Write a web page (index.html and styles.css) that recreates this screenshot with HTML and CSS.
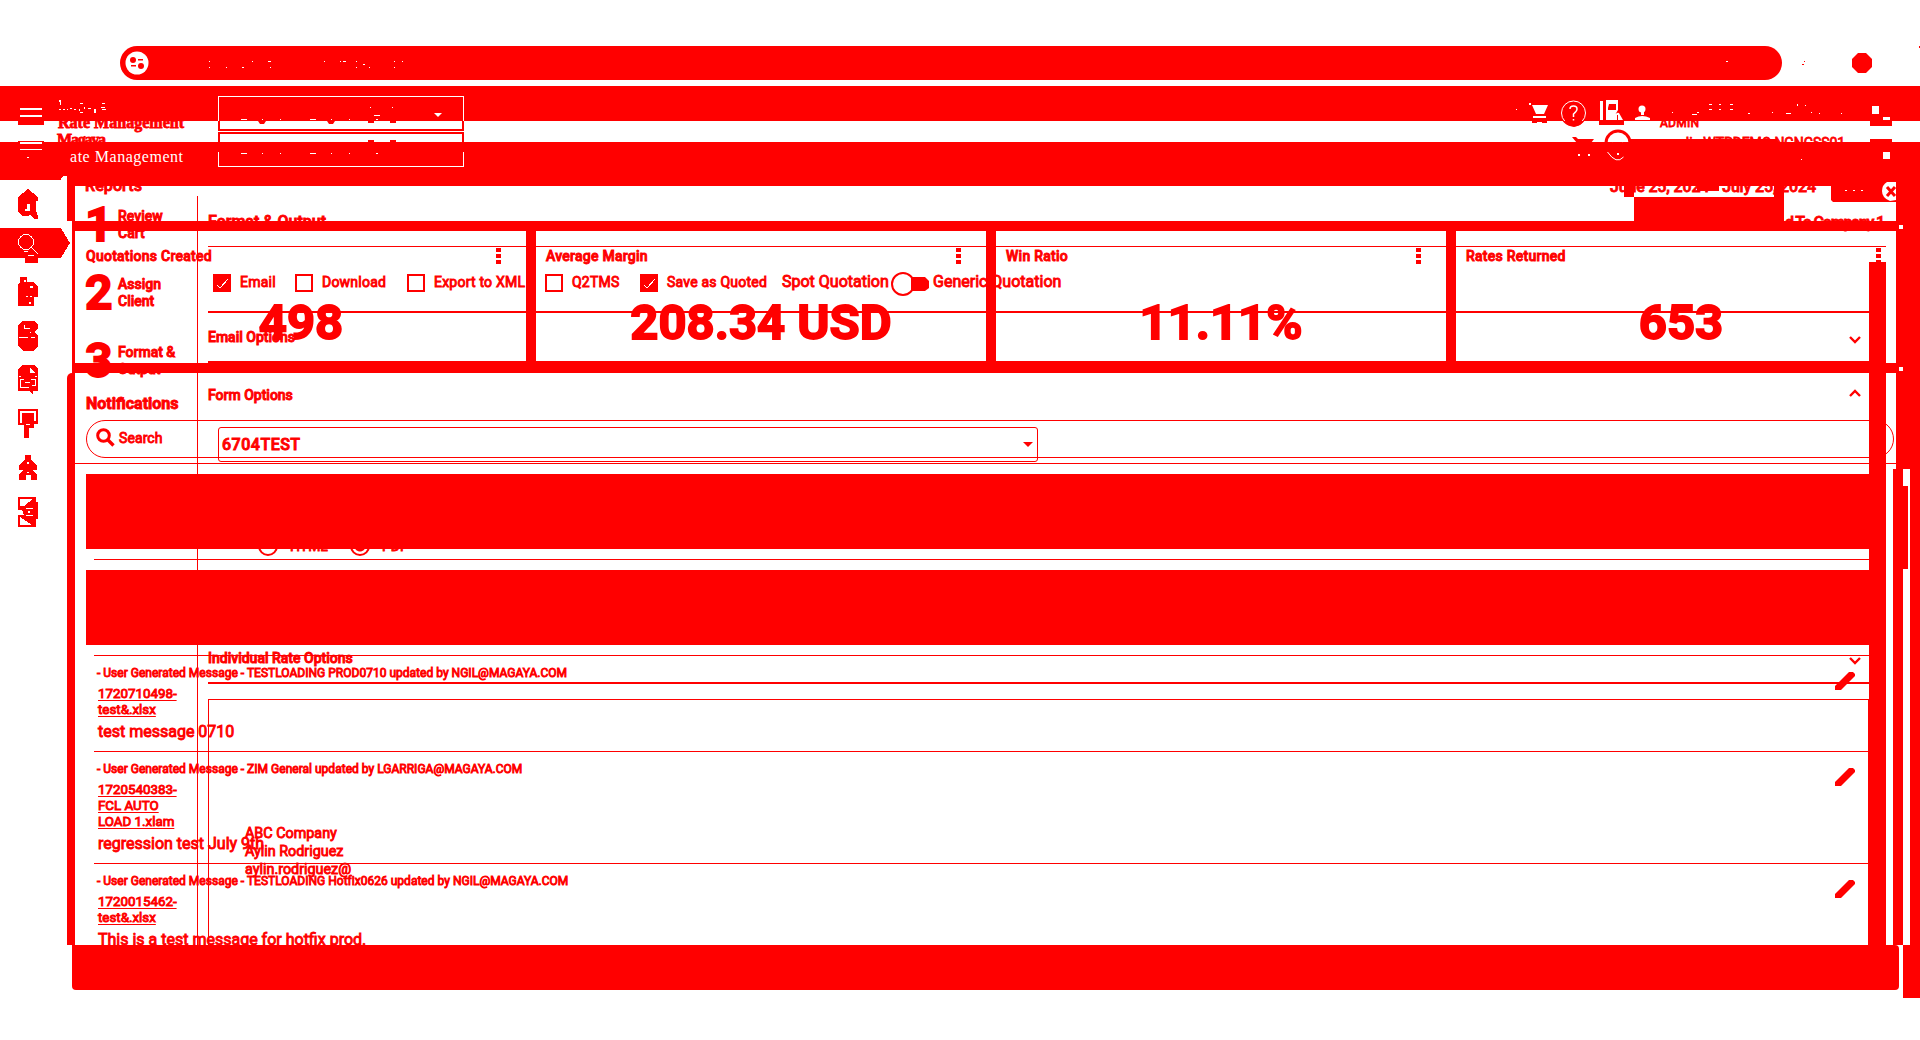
FILE: index.html
```html
<!DOCTYPE html>
<html lang="en">
<head>
<meta charset="utf-8">
<title>Rate Management</title>
<link rel="stylesheet" href="styles.css">
</head>
<body>
<div class="stage">
  <div class="layer dash">
    <div class="address"></div>
    <div class="band top"></div>
    <div class="band second"></div>
    <div class="body">
      <nav class="side">
        <svg width="70" height="369" viewBox="0 176 70 369" shape-rendering="crispEdges">
          <path fill="#fff" d="M63 176h4v10h-6v-8z"/>
          <path d="M0 228h61l9 15-9 15H0z"/>
          <path d="M28 189l10 8v4h-2v10l2 5v3h-3l-5-4-3 1h-5l-4-4v-15z"/>
          <path fill="#fff" d="M27 204h3v7h-5v-2h2z"/>
          <g fill="none" stroke="#fff" stroke-width="1"><circle cx="26" cy="242" r="7.5"/><path d="M31 247l7 7M24 251h4M28 255h6"/></g>
          <path d="M25 258h13v5H25z"/>
          <path d="M20 277h7v5h7l4 5v10h-4v9H18v-22l2-1z"/><path fill="#fff" d="M24 280h2v2h-2zM30 286h3v2h-3zM26 296h2v1h-2zM30 296h2v1h-2zM29 302h2v2h-2z"/>
          <path d="M22 321h12l4 4v4l-4 3 4 4v10l-5 5H23l-5-5v-21z"/><path fill="#fff" d="M24 325h1v3h5v1h-6zM19 337h9v1h-9zM31 337h4v1h-4zM30 332h1v1h-1z"/>
          <path d="M22 365h12l4 4v22h-5v4l-4-4H18v-22z"/><path fill="#fff" d="M30 367l5 6h-5zM19 376h2v1h-2zM35 376h2v1h-2zM20 379h4v1h-4zM31 379h5v1h-5zM20 380h1v7h8v1h-9zM35 380h1v6h-4v-1h3zM25 382h5v1h-5z"/>
          <path d="M18 409h20v15h-4v4h-5v10h-5v-13h-6z"/><path fill="#fff" d="M20 411h16v10h-2v-8H22v10h-2zM26 424h4v1h-4z"/>
          <path d="M25 455h6v5l6 5v5h-5l5 5v5h-6v-5h-5v5h-7v-5l4-5h-4v-5l6-5z"/><path fill="#fff" d="M27 462h2v2h-2zM27 472h2v1h-2z"/>
          <path d="M18 497h18v5h2v17h-2v8H18v-12h6l-2-5h-4z"/><path fill="#fff" d="M20 499h13l-9 7h-4zM20 517l12 8H20zM26 508h7v1h-7zM26 515h7v1h-7zM28 511h2v2h-2z"/>
        </svg>
      </nav>
      <main class="main">
        <header class="report-head"><span class="rep">Reports</span></header>
        <section class="kpis">
          <article class="kpi"><h3>Quotations Created</h3><i class="dots"></i><b>498</b></article>
          <article class="kpi"><h3>Average Margin</h3><i class="dots"></i><b>208.34 USD</b></article>
          <article class="kpi"><h3>Win Ratio</h3><i class="dots"></i><b>11.11%</b></article>
          <article class="kpi last"><h3>Rates Returned</h3><i class="dots"></i><b>653</b></article>
        </section>
        <section class="notes">
          <div class="notes-body">
            <h2>Notifications</h2>
            <div class="search"><svg width="20" height="20" viewBox="0 0 20 20"><circle cx="7.5" cy="7.5" r="5.8" fill="none" stroke="red" stroke-width="3"/><path d="M11.5 11.5l6 6" stroke="red" stroke-width="3.4"/></svg><span>Search</span></div>
            <div class="rule"></div>
            <div class="block"></div>
            <div class="sep"></div>
            <div class="block"></div>
            <div class="sep"></div>
            <article class="msg"><svg class="pen" width="20" height="18"><path d="M0 14L14 0h4l2 2v2L6 18H0z"/></svg><p class="meta">- User Generated Message - TESTLOADING PROD0710 updated by NGIL@MAGAYA.COM</p><a>1720710498-</a><a>test&amp;.xlsx</a><p class="text">test message 0710</p></article>
            <article class="msg tall"><svg class="pen" width="20" height="18"><path d="M0 14L14 0h4l2 2v2L6 18H0z"/></svg><p class="meta">- User Generated Message - ZIM General updated by LGARRIGA@MAGAYA.COM</p><a>1720540383-</a><a>FCL AUTO</a><a>LOAD 1.xlam</a><p class="text">regression test July 9th</p></article>
            <article class="msg cut"><svg class="pen" width="20" height="18"><path d="M0 14L14 0h4l2 2v2L6 18H0z"/></svg><p class="meta">- User Generated Message - TESTLOADING Hotfix0626 updated by NGIL@MAGAYA.COM</p><a>1720015462-</a><a>test&amp;.xlsx</a><p class="text">This is a test message for hotfix prod.</p></article>
          </div>
          <div class="rail"><div class="rail-top"></div><div class="rail-low"><i class="rail-bar"></i><i class="thumb"></i><i class="rail-bar"></i></div></div>
        </section>
        <footer class="foot"><div class="foot-main"></div><div class="foot-end"></div></footer>
      </main>
    </div>
  </div>

  <div class="layer quote">
    <ol class="steps">
      <li><b>1</b><span>Review<br>Cart</span></li>
      <li><b>2</b><span>Assign<br>Client</span></li>
      <li><b>3</b><span>Format &amp;<br>Output</span></li>
    </ol>
    <div class="form">
      <h2>Format &amp; Output</h2>
      <div class="form-row">
        <div class="fields">
          <div class="checks">
            <label class="c1"><svg class="box" width="18" height="18"><path d="M0 0h18v18H0z"/><path d="M4 11l3 3 8-9" fill="none" stroke="#fff" shape-rendering="crispEdges"/></svg><span>Email</span></label>
            <label class="c2"><i class="box"></i><span>Download</span></label>
            <label class="c3"><i class="box"></i><span>Export to XML</span></label>
            <label class="c4"><i class="box"></i><span>Q2TMS</span></label>
            <label class="c5"><svg class="box" width="18" height="18"><path d="M0 0h18v18H0z"/><path d="M4 11l3 3 8-9" fill="none" stroke="#fff" shape-rendering="crispEdges"/></svg><span>Save as Quoted</span></label>
            <span class="spot">Spot Quotation</span><svg class="toggle" width="40" height="24"><path d="M20 5h14l4 4v7l-4 3H20z"/><circle cx="12" cy="12" r="11" fill="none" stroke="red" stroke-width="2"/></svg><span class="generic">Generic Quotation</span>
          </div>
          <div class="panel"><span>Email Options</span><svg width="14" height="9"><path d="M2 2l5 5 5-5" class="chev"/></svg></div>
          <div class="panel-open"><span>Form Options</span><svg width="14" height="9"><path d="M2 7l5-5 5 5" class="chev"/></svg></div>
          <div class="select"><span>6704TEST</span><svg width="10" height="5"><path d="M0 0h10L5 5z"/></svg></div>
          <div class="radios"><i class="radio"></i><span class="html">HTML</span><i class="radio on"></i><span>PDF</span></div>
          <div class="panel-end"><span>Individual Rate Options</span><svg width="14" height="9"><path d="M2 2l5 5 5-5" class="chev"/></svg></div>
          <div class="editor"><p>ABC Company</p><p>Aylin Rodriguez</p><p>aylin.rodriguez@</p></div>
        </div>
        <div class="scroll"></div>
      </div>
    </div>
  </div>

  <svg class="layer header" width="1920" height="400" viewBox="0 0 1920 400">
    <!-- address bar -->
    <circle cx="137" cy="63" r="11.5" fill="#fff"/>
    <circle cx="133" cy="60" r="3"/><circle cx="141" cy="66" r="3"/><path d="M138 59h5v1.500h-5zM131 65h5v1.500h-5z"/>
    <path d="M1858 53h8l6 6v8l-6 6h-8l-6-6v-8z"/><path d="M1803 64h1v1h-1zM1804 61h1v1h-1zM1802 64h1v1h-1zM1919 46h1v2h-1zM267 389h1v1h-1z"/>
    <path fill="#fff" d="M209 61h1v1h-1zM209 67h1v1h-1zM226 67h1v1h-1zM242 67h2v1h-2zM252 61h1v1h-1zM268 61h3v1h-3zM270 67h1v1h-1zM324 61h1v1h-1zM340 61h1v1h-1zM343 61h3v1h-3zM356 61h1v1h-1zM356 67h1v1h-1zM363 64h2v1h-2zM369 67h1v1h-1zM394 61h1v1h-1zM394 67h1v1h-1zM402 61h1v1h-1zM1726 61h2v1h-2z"/>
    <!-- brand -->
    <g class="brand"><text x="58" y="128" textLength="126">Rate Management</text><text x="57" y="145" textLength="49">Magaya</text></g>
    <g shape-rendering="crispEdges"><path fill="red" d="M0 142h1920v8H0z"/>
    <path fill="#fff" d="M20 108h22v2H20zM20 115h22v2H20zM20 142h22v2H20zM20 149h22v1H20zM27 157h2v1h-2z"/><path d="M18 121h26v4H18zM18 141h26v1H18z"/>
    <path fill="#fff" d="M59 100h2v2h-2zM60 102h1v3h-1zM59 109h2v1h-2zM63 109h2v1h-2zM67 109h1v1h-1zM70 108h2v1h-2zM74 109h2v1h-2zM79 109h1v2h-1zM80 103h3v1h-3zM84 107h1v2h-1zM80 112h3v1h-3zM88 108h3v1h-3zM94 109h2v4h-2zM102 103h3v1h-3zM101 107h4v1h-4zM102 109h4v1h-4z"/></g>
    <g class="brand light"><text x="70" y="162" textLength="113">ate Management</text></g>
    <g fill="none" shape-rendering="crispEdges"><path stroke="#fff" d="M218.500 121V96.500h245V121M218.500 152v14.500h245V152"/><path stroke="red" stroke-width="2" d="M219 121v9h244v-9M219 142v-9h244v9"/></g>
    <path fill="#fff" d="M434 113h8l-4 4zM241 119h6v1h-6zM310 119h6v1h-6zM241 153h6v1h-6zM310 153h6v1h-6zM262 119h1v1h-1zM280 119h1v1h-1zM331 119h1v1h-1zM349 119h1v1h-1zM374 115h6v1h-6zM376 119h2v1h-2zM370 107h1v1h-1zM392 107h1v1h-1zM262 153h1v1h-1zM280 153h1v1h-1zM331 153h1v1h-1zM349 153h1v1h-1zM376 153h2v1h-2z"/>
    <path d="M258 121h8l-2 3h-4zM327 121h8l-2 3h-4zM368 121h6v2h-6zM390 121h6v2h-6zM368 140h6v2h-6zM390 140h6v2h-6z"/>
    <!-- user tools -->
    <path fill="#fff" d="M1529 103h2v2h-2zM1532 105h16l-4 9h-8zM1533 116h13v2h-13zM1516 109h1v1h-1z"/><path d="M1532 120h15v3h-5v-1h-5v1h-5z"/>
    <circle cx="1573.500" cy="113" r="12" fill="none" stroke="red" stroke-width="3"/><circle cx="1573.500" cy="113" r="12" fill="none" stroke="#fff"/><path fill="none" stroke="#fff" stroke-width="1.500" d="M1570 109q0-3 3.500-3t3.500 3q0 2-3.500 5v3M1573.500 119v1.500"/><path d="M1563 121h21l-4 4-6 2-6-2z"/>
    <path fill="#fff" d="M1600 101h3v19h-3zM1606 100h12v10l-6 10h-6zM1612 120q4-9 7-7l4 7z"/><path d="M1609 104h7v6h-8v-2zM1599 121h25v4h-25zM1617 115h1v6h-1z"/>
    <circle cx="1642" cy="109" r="3.500" fill="#fff"/><path fill="#fff" d="M1635 120v-2q7-4 15 0v2zM1641 112h3v3h-3z"/>
    <text class="admin" x="1660" y="127" textLength="39">ADMIN</text>
    <path fill="#fff" d="M1672 112h1v1h-1zM1692 114h5v1h-5zM1697 112h2v1h-2zM1709 104h3v1h-3zM1719 104h2v1h-2zM1730 104h3v1h-3zM1709 109h3v1h-3zM1719 109h2v1h-2zM1730 109h3v1h-3zM1748 113h2v1h-2zM1772 112h1v1h-1zM1786 113h5v1h-5zM1797 104h1v2h-1zM1805 105h1v1h-1zM1811 112h1v1h-1zM1819 113h1v1h-1zM1841 113h1v1h-1zM1872 106h7v8h-7zM1883 117h7v3h-7z"/>
    <path d="M1870 121h22v5h-22zM1870 139h22v3h-22zM1572 137h4l2 2h16l-3 4h-14zM1630 139h147v3h-147z"/>
    <text class="user" x="1672" y="148" textLength="173">aylin WTPDEMO NGNGSS01</text>
    <path d="M1630 142h240v10h-240z"/>
    <path fill="none" stroke="red" stroke-width="3" d="M1606 143a12 12 0 0 1 24 0"/><path d="M1606 142h24v8h-24z"/>
    <path fill="none" stroke="#fff" d="M1612 142q5-6 11 0M1607.500 152q9 13 16 5"/>
    <path fill="#fff" d="M1617 153h2v2h-2zM1578 154h2v2h-2zM1588 154h2v2h-2zM1801 159h1v1h-1zM1883 152h7v7h-7z"/>
    <!-- report period -->
    <text class="period" x="1610" y="192" textLength="206">June 25, 2024 - July 25, 2024</text>
    <path d="M1624 186h10v11h-10zM1774 186h10v11h-10zM1634 197h150v24h-150zM1831 186h65v16h-63l-2-2zM1697 186h22v5h-22z"/>
    <text class="company" x="1785" y="228" textLength="100">d To Company 1</text>
    <path fill="#fff" d="M1845 190h2v1h-2zM1853 190h2v1h-2zM1861 190h2v1h-2z"/>
    <path fill="#fff" d="M1887 182h9v18l-6 1q-8-3-8-10 0-6 5-9z"/><path d="M1887 187l8 9M1895 187l-8 9" stroke="red" stroke-width="3"/>
    <path fill="#fff" d="M1899 225h4v4h-4zM1899 367h4v4h-4z"/>
  </svg>
</div>
</body>
</html>
```
FILE: styles.css
```css
* { box-sizing: border-box; }
body { margin: 0; background: #fff; color: red; font: 14px Roboto, sans-serif; -webkit-text-stroke: .9px red; overflow: hidden; }
h2, h3, p, ol { margin: 0; padding: 0; list-style: none; }
svg { fill: red; display: block; flex: none; }
i { display: block; flex: none; }
span { white-space: nowrap; }

/* overlaid screens share one grid cell */
.stage { display: grid; width: 1920px; height: 1040px; overflow: hidden; }
.layer { grid-area: 1 / 1; min-width: 0; }
.chev { fill: none; stroke: red; stroke-width: 2.4; }

.dash { padding-top: 46px; }
.address { height: 34px; width: 1662px; margin-left: 120px; border-radius: 17px; background: red; }
.band { background: red; }
.top { height: 35px; margin-top: 6px; }
.second { height: 38px; margin-top: 21px; }
.body { display: flex; }
.side { width: 67px; flex: none; }
.side svg { margin-top: -4px; overflow: visible; }
.main { flex: 1; min-width: 0; }

.report-head { height: 41px; border-style: solid; border-color: red; border-width: 6px 24px 0 8px; padding-left: 10px; }
.rep { font-size: 16px; font-weight: 500; line-height: 0; display: block; letter-spacing: .1px; }
.kpis { margin-left: 5px; height: 152px; border: solid red; border-width: 10px 24px 10px 3px; background: red; display: grid; grid-template-columns: 451px 450px 450px 440px; gap: 10px; }
.kpi { background: #fff; display: grid; grid-template-columns: 1fr 5px; grid-template-rows: 50px 82px; padding: 0 25px 0 11px; }
.kpi:not(:first-child) { padding-left: 10px; }
.kpi h3 { font-size: 14px; font-weight: 500; line-height: 50px; letter-spacing: .25px; }
.kpi b { grid-column: 1 / 3; font-size: 49px; line-height: 83px; font-weight: 700; padding-left: 15px; text-align: center; -webkit-text-stroke: 1.8px red; }
.kpi.last { padding-right: 15px; }
.dots { width: 5px; height: 17px; margin-top: 17px; background: repeating-linear-gradient(red 0 4px, #fff 4px 6px); }

.notes { display: flex; height: 572px; overflow: hidden; border-left: 8px solid red; border-top-left-radius: 5px; }
.notes-body { width: 1818px; flex: none; }
.notes h2 { font-size: 16px; font-weight: 700; height: 47px; line-height: 61px; padding-left: 11px; }
.search { height: 38px; width: 1808px; margin-left: 11px; border: 1px solid red; border-radius: 19px; display: flex; padding: 7px 9px; gap: 3px; line-height: 20px; letter-spacing: .1px; }
.rule { height: 1px; width: 1821px; margin-top: 5px; background: red; }
.block { height: 75px; width: 1783px; margin: 10px 0 0 11px; background: red; }
.sep { height: 1px; width: 1775px; margin: 10px 0 0 19px; background: red; }
.msg { margin-left: 19px; width: 1775px; height: 96px; border-bottom: 1px solid red; padding-left: 4px; }
.tall { height: 112px; }
.cut { border: 0; }
.pen { float: right; margin: 16px 14px 0 0; }
.meta { font-size: 12px; height: 30px; line-height: 34px; margin-left: -1px; white-space: nowrap; letter-spacing: .015px; }
.msg a { display: block; width: fit-content; font-size: 13.33px; line-height: 16px; text-decoration: underline; text-underline-offset: 2px; text-decoration-thickness: 1px; }
.text { margin-top: 4px; font-size: 16px; line-height: 19px; }
.rail { width: 27px; display: flex; flex-direction: column; }
.rail-top { height: 96px; margin-left: 3px; background: red; }
.rail-low { flex: 1; display: flex; }
.rail-bar { width: 10px; background: red; }
.thumb { width: 5px; height: 83px; margin: 17px 2px 0 0; background: red; }
.foot { display: flex; gap: 4px; padding-left: 5px; }
.foot-main { width: 1827px; height: 45px; background: red; border-radius: 0 4px 4px 4px; }
.foot-end { width: 17px; height: 53px; background: red; }

.quote { display: flex; padding: 196px 0 0 86px; }
.steps { width: 111px; flex: none; }
.steps li { display: flex; height: 68px; }
.steps b { width: 32px; font-size: 48px; line-height: 57px; margin-left: -1px; margin-right: 1px; -webkit-text-stroke: 1.8px red; }
.steps span { padding-top: 12px; font-weight: 500; line-height: 16.5px; }
.form { width: 1689px; height: 749px; border-left: 1px solid red; padding-left: 10px; }
.form h2 { height: 51px; font-size: 16px; line-height: 51px; font-weight: 500; border-bottom: 1px solid red; }
.form-row { display: flex; height: 698px; }
.fields { width: 1661px; flex: none; }
.scroll { width: 17px; margin-top: 15px; background: red; }
.checks { display: flex; height: 64px; padding: 27px 0 0 5px; line-height: 16px; }
.checks label { display: flex; gap: 9px; flex: none; letter-spacing: .22px; }
.box { width: 18px; height: 18px; }
i.box { border: 2px solid red; }
.c1 { width: 82px; } .c2 { width: 112px; } .c3 { width: 138px; } .c4 { width: 95px; } .c5 { width: 142px; }
.spot, .generic { font-size: 16px; line-height: 15px; }
.spot { width: 109px; }
.toggle { margin-top: -2px; }
.generic { margin-left: 2px; }
.panel, .panel-open, .panel-end { display: flex; justify-content: space-between; align-items: center; padding-right: 7px; font-weight: 500; }
.panel { height: 52px; border: solid red; border-width: 2px 0; }
.panel svg { margin-top: 4px; }
.panel-open { height: 64px; }
.panel-open svg { margin-bottom: 4px; }
.select { height: 35px; width: 820px; margin-left: 10px; border: 1px solid red; border-radius: 3px; display: flex; justify-content: space-between; align-items: center; padding: 0 4px 0 3px; font-size: 16px; font-weight: 500; letter-spacing: .5px; }
.radios { height: 180px; padding: 74px 0 0 50px; display: flex; line-height: 20px; }
.radio { width: 20px; height: 20px; border: 2px solid red; border-radius: 50%; }
.html { width: 60px; }
.radios span { margin-left: 12px; }
.radio.on { background: radial-gradient(red 5px, transparent 6px); }
.panel-end { height: 42px; padding-bottom: 8px; border-bottom: 2px solid red; }
.panel-end svg { margin-top: 4px; }
.editor { height: 246px; margin-top: 15px; border: solid red; border-width: 1px 1px 0; padding: 125px 0 0 36px; font-size: 14.35px; line-height: 18px; }

.header { pointer-events: none; }
.header text { stroke: red; stroke-width: .8px; }
.brand { font: bold 16px "Liberation Serif", serif; }
.light { fill: #fff; font-weight: 400; }
.header .light text { stroke: none; }
.admin { font-size: 12px; }
.user { font-size: 14px; }
.period, .company { font-size: 16px; font-weight: 500; }
```
